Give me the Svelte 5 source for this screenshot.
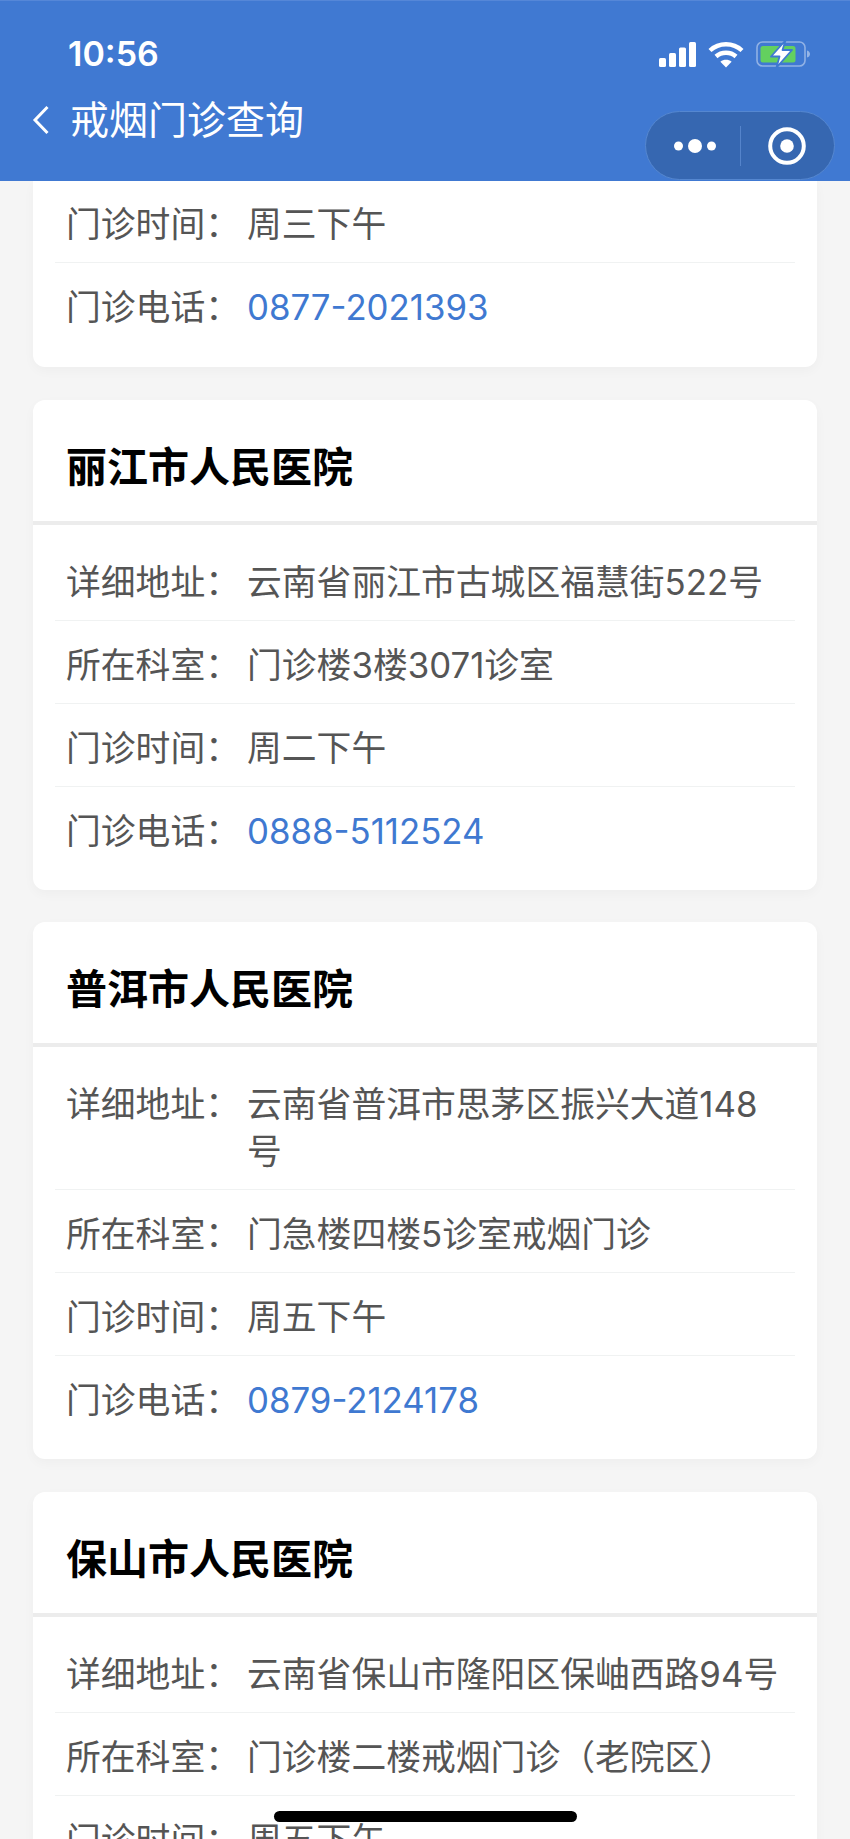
<script>
  const cards = [
    {
      name: '丽江市人民医院',
      rows: [
        ['详细地址', '云南省丽江市古城区福慧街522号'],
        ['所在科室', '门诊楼3楼3071诊室'],
        ['门诊时间', '周二下午'],
        ['门诊电话', '0888-5112524', true]
      ]
    },
    {
      name: '普洱市人民医院',
      rows: [
        ['详细地址', '云南省普洱市思茅区振兴大道148号'],
        ['所在科室', '门急楼四楼5诊室戒烟门诊'],
        ['门诊时间', '周五下午'],
        ['门诊电话', '0879-2124178', true]
      ]
    },
    {
      name: '保山市人民医院',
      rows: [
        ['详细地址', '云南省保山市隆阳区保岫西路94号'],
        ['所在科室', '门诊楼二楼戒烟门诊（老院区）'],
        ['门诊时间', '周五下午']
      ]
    }
  ];
  const firstRows = [
    ['门诊时间', '周三下午'],
    ['门诊电话', '0877-2021393', true]
  ];
</script>

{#snippet row(r)}
  <div class="row">
    <span class="label">{r[0]}：</span>
    <span class="value" class:phone={r[2]}>{r[1]}</span>
  </div>
{/snippet}

<div class="page">
  <header class="header">
    <div class="status">
      <span class="time">10:56</span>
      <div class="status-icons">
        <svg width="37" height="25" viewBox="0 0 37 25" fill="#fff">
          <rect x="0" y="16" width="7" height="9" rx="1.5" />
          <rect x="10" y="11" width="7" height="14" rx="1.5" />
          <rect x="20" y="5.500" width="7" height="19.500" rx="1.5" />
          <rect x="30" y="0" width="7" height="25" rx="1.5" />
        </svg>
        <svg width="36" height="27" viewBox="0 0 36 27" fill="none" stroke="#fff" stroke-width="4.4">
          <path d="M2 9.5C11 1.2 25 1.2 34 9.5" />
          <path d="M8 15.5C13.5 10.5 22.5 10.5 28 15.5" />
          <path d="M18 26.5l-5.6-5.8c3.2-2.6 8-2.6 11.2 0z" fill="#fff" stroke="none" />
        </svg>
        <svg width="54" height="28" viewBox="0 0 54 28">
          <rect x="1" y="2" width="48" height="24" rx="5.5" fill="none" stroke="#fff" stroke-opacity=".42" stroke-width="1.6" />
          <path d="M51 10.5c2 .5 3 2 3 3.500s-1 3-3 3.500z" fill="#fff" fill-opacity=".45" />
          <rect x="4.500" y="6" width="35" height="16.500" rx="2.500" fill="#63d05f" />
          <path d="M29.500 0.500 L15 16.500 H23.500 L20.500 27.500 L36 10 H26.500 Z" fill="#fff" stroke="#3f79d1" stroke-width="1.800" stroke-linejoin="round" />
        </svg>
      </div>
    </div>
    <div class="nav">
      <svg class="back" width="18" height="30" viewBox="0 0 18 30" fill="none" stroke="#fff" stroke-width="3">
        <path d="M15.500 2 L3 15 L15.500 28" />
      </svg>
      <span class="title">戒烟门诊查询</span>
    </div>
    <div class="capsule">
      <div class="cap-side dots">
        <svg width="42" height="16" viewBox="0 0 42 16" fill="#fff">
          <circle cx="4.500" cy="8" r="4.500" />
          <circle cx="21" cy="8" r="7" />
          <circle cx="37.500" cy="8" r="4.500" />
        </svg>
      </div>
      <span class="cap-line"></span>
      <div class="cap-side">
        <svg width="38" height="38" viewBox="0 0 38 38">
          <circle cx="19" cy="19" r="16.800" fill="none" stroke="#fff" stroke-width="4" />
          <circle cx="19" cy="19" r="6.800" fill="#fff" />
        </svg>
      </div>
    </div>
  </header>

  <main class="list">
    <section class="card first">
      <div class="rows first-rows">
        {#each firstRows as r}
          {@render row(r)}
        {/each}
      </div>
    </section>
    {#each cards as c}
      <section class="card">
        <h2 class="name">{c.name}</h2>
        <div class="rows">
          {#each c.rows as r}
            {@render row(r)}
          {/each}
        </div>
      </section>
    {/each}
  </main>

  <div class="home"></div>
</div>

<style>
  :global(body) {
    margin: 0;
    background: #f5f5f5;
  }
  .page {
    position: relative;
    width: 850px;
    height: 1839px;
    overflow: hidden;
    background: #f5f5f5;
    font-family: "Inter", "Noto Sans CJK SC", sans-serif;
  }
  .header {
    position: relative;
    z-index: 1;
    height: 181px;
    box-sizing: border-box;
    background: #4079d2;
    border-top: 1px solid #5587d8;
    color: #fff;
  }
  .status {
    display: flex;
    justify-content: space-between;
    align-items: center;
    height: 38px;
    margin-top: 34px;
    padding: 0 40px 0 68px;
  }
  .time {
    font-size: 34px;
    font-weight: 600;
    line-height: 38px;
  }
  .status-icons {
    display: flex;
    align-items: center;
    gap: 12px;
  }
  .nav {
    display: flex;
    align-items: center;
    gap: 20px;
    height: 60px;
    margin-top: 17px;
    padding-left: 32px;
  }
  .title {
    font-size: 39px;
    line-height: 50px;
  }
  .capsule {
    position: absolute;
    left: 645px;
    top: 110px;
    display: flex;
    align-items: center;
    width: 190px;
    height: 69px;
    box-sizing: border-box;
    background: #3667b1;
    border: 1px solid #5587d0;
    border-radius: 35px;
  }
  .cap-side {
    flex: 1;
    display: flex;
    justify-content: center;
    align-items: center;
  }
  .dots svg {
    margin-left: 4px;
  }
  .cap-line {
    width: 1px;
    height: 40px;
    background: #5584cb;
  }
  .list {
    display: flex;
    flex-direction: column;
    gap: 32.500px;
    padding: 0 33px;
  }
  .card {
    background: #fff;
    border-radius: 12px;
    padding-bottom: 21px;
    box-shadow: 0 4px 12px rgba(0, 0, 0, 0.03);
  }
  .card.first {
    padding-bottom: 22px;
    border-radius: 0 0 12px 12px;
  }
  .name {
    margin: 0;
    height: 108px;
    padding: 13px 0 0 33px;
    border-bottom: 4px solid #ececec;
    font-size: 41px;
    font-weight: 700;
    line-height: 108px;
    color: #000;
  }
  .rows {
    padding: 13px 22px 0;
  }
  .first-rows {
    padding-top: 0;
    margin-top: -1px;
  }
  .row {
    display: flex;
    padding: 21px 13px 14px 11px;
    border-bottom: 1px solid #f0f2f2;
    font-size: 34.800px;
    line-height: 47px;
    color: #555;
  }
  .row:last-child {
    border-bottom: 0;
  }
  .label {
    flex: none;
    width: 181px;
  }
  .value {
    flex: 1;
  }
  .phone {
    color: #3f79d1;
  }
  .home {
    position: absolute;
    z-index: 2;
    left: 274px;
    top: 1811px;
    width: 303px;
    height: 11px;
    background: #000;
    border-radius: 6px;
  }
</style>
